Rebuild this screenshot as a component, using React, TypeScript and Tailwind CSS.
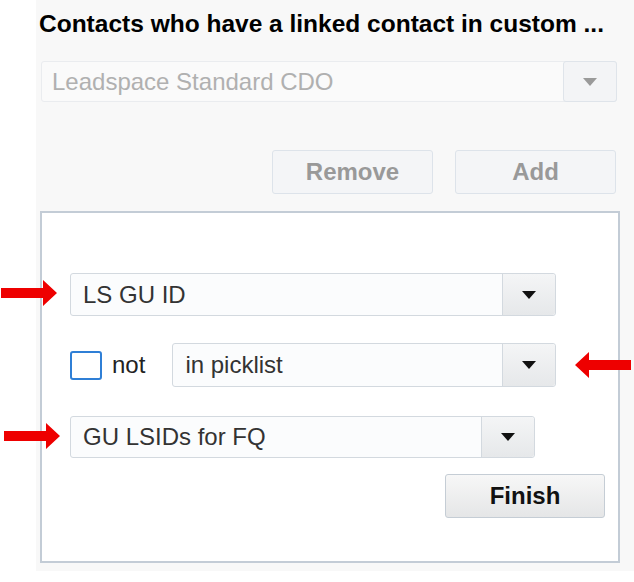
import React from "react";

const font = { fontFamily: '"Liberation Sans", Arial, sans-serif' };

function Caret({ muted = false }: { muted?: boolean }) {
  return (
    <svg width="14" height="8" viewBox="0 0 14 8">
      <polygon points="0,0 14,0 7,8" fill={muted ? "#9a9a9a" : "#111"} />
    </svg>
  );
}

function Arrow({ dir }: { dir: "right" | "left" }) {
  const pts =
    dir === "right"
      ? "0,8 42,8 42,0 56,13 42,26 42,18 0,18"
      : "56,8 14,8 14,0 0,13 14,26 14,18 56,18";
  return (
    <svg width="56" height="26" viewBox="0 0 56 26">
      <polygon points={pts} fill="#ee0000" />
    </svg>
  );
}

function Select({
  label,
  width,
  height,
}: {
  label: string;
  width: string;
  height: string;
}) {
  return (
    <div
      className={`${width} ${height} flex border border-[#d3d9df] rounded-[3px] bg-[#fbfcfd]`}
    >
      <div className="flex-1 flex items-center pl-3 text-[24px] text-[#333]">
        {label}
      </div>
      <div className="w-[53px] flex items-center justify-center border-l border-[#d3d9df] bg-gradient-to-b from-[#f4f5f6] to-[#e6e8ea] rounded-r-[3px]">
        <Caret />
      </div>
    </div>
  );
}

export default function App() {
  return (
    <div className="relative w-[634px] h-[582px] bg-white flex" style={font}>
      <div className="ml-[36px] w-[598px] h-[571px] bg-[#f8f8f8] flex flex-col pl-[4px]">
        <h2 className="mt-[11px] ml-[-1px] text-[24.5px] leading-[26px] font-bold text-black whitespace-nowrap">
          Contacts who have a linked contact in custom ...
        </h2>

        <div className="mt-[24px] ml-[1px] w-[576px] h-[41px] flex border border-[#eaecef] rounded-[3px] bg-[#fafafa]">
          <div className="flex-1 flex items-center pl-[10px] text-[24px] text-[#b0b0b0]">
            Leadspace Standard CDO
          </div>
          <div className="w-[54px] flex items-center justify-center border border-[#dfe4ea] -m-px bg-[#f3f4f6] rounded-[3px]">
            <Caret muted />
          </div>
        </div>

        <div className="mt-[48px] flex justify-end gap-[22px] pr-[18px]">
          <button className="w-[161px] h-[44px] border border-[#dde3ea] rounded-[3px] bg-[#f4f5f7] text-[24px] font-bold text-[#999]">
            Remove
          </button>
          <button className="w-[161px] h-[44px] border border-[#dde3ea] rounded-[3px] bg-[#f4f5f7] text-[24px] font-bold text-[#999]">
            Add
          </button>
        </div>

        <div className="mt-[17px] w-[580px] h-[352px] border-2 border-[#c3ccd6] bg-white flex flex-col pl-[28px]">
          <div className="mt-[60px]">
            <Select label="LS GU ID" width="w-[486px]" height="h-[43px]" />
          </div>

          <div className="mt-[27px] flex items-center">
            <div className="w-[32px] h-[29px] border-2 border-[#2f7fd6] rounded-[3px] bg-white" />
            <span className="ml-[10px] text-[24px] text-[#222]">not</span>
            <div className="ml-[27px]">
              <Select label="in picklist" width="w-[384px]" height="h-[44px]" />
            </div>
          </div>

          <div className="mt-[29px]">
            <Select label="GU LSIDs for FQ" width="w-[465px]" height="h-[42px]" />
          </div>

          <div className="mt-[16px] flex justify-end pr-[13px]">
            <button className="w-[160px] h-[44px] border border-[#c5cdd5] rounded-[3px] bg-gradient-to-b from-[#f7f7f7] to-[#e5e6e7] text-[24px] font-bold text-[#111]">
              Finish
            </button>
          </div>
        </div>
      </div>

      <div className="absolute left-[1px] top-[280px]">
        <Arrow dir="right" />
      </div>
      <div className="absolute left-[575px] top-[352px]">
        <Arrow dir="left" />
      </div>
      <div className="absolute left-[4px] top-[423px]">
        <Arrow dir="right" />
      </div>
    </div>
  );
}
